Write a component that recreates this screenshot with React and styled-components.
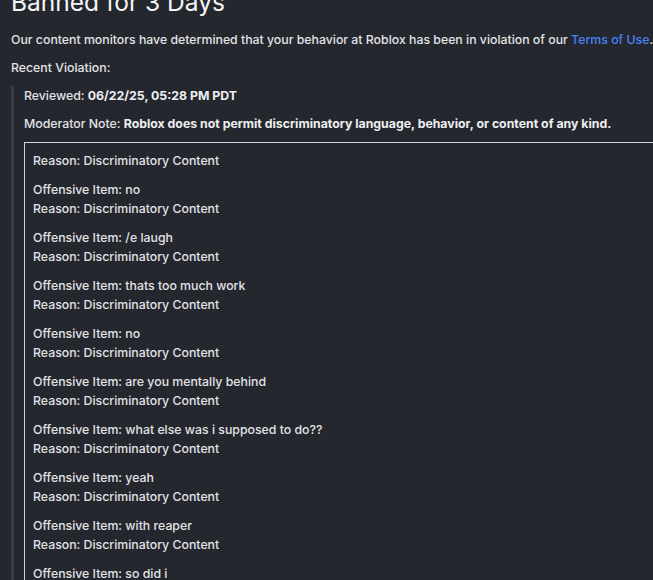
import React from "react";
import styled, { createGlobalStyle } from "styled-components";

const items = [
  { item: null },
  { item: "no" },
  { item: "/e laugh" },
  { item: "thats too much work" },
  { item: "no" },
  { item: "are you mentally behind" },
  { item: "what else was i supposed to do??" },
  { item: "yeah" },
  { item: "with reaper" },
  { item: "so did i" },
  { item: "ok" },
];

const GlobalStyle = createGlobalStyle`
  html, body {
    margin: 0;
    background: #25272e;
    overflow: hidden;
  }
  body {
    font-family: "Inter", "Liberation Sans", sans-serif;
    color: #e2e3e6;
  }
`;

const App = () => {
  return (
    <>
      <GlobalStyle />
      <Page>
        <Title>Banned for 3 Days</Title>
        <Text>
          Our content monitors have determined that your behavior at Roblox has
          been in violation of our <Link href="#">Terms of Use</Link>.
        </Text>
        <Text>Recent Violation:</Text>
        <Quote>
          <Text>
            Reviewed: <b>06/22/25, 05:28 PM PDT</b>
          </Text>
          <Text>
            Moderator Note:{" "}
            <b>
              Roblox does not permit discriminatory language, behavior, or
              content of any kind.
            </b>
          </Text>
          <Box>
            {items.map((entry, i) => (
              <Entry key={i}>
                {entry.item !== null && (
                  <Line>Offensive Item: {entry.item}</Line>
                )}
                <Line>Reason: Discriminatory Content</Line>
              </Entry>
            ))}
          </Box>
        </Quote>
      </Page>
    </>
  );
};

const Page = styled.div`
  margin-top: -16px;
  padding: 0 0 0 11px;
  width: 720px;
`;

const Title = styled.h1`
  margin: 0 0 10px;
  font-size: 24.5px;
  line-height: 36px;
  font-weight: 400;
  color: #f4f5f6;
`;

const Text = styled.p`
  margin: 0 0 9px;
  font-size: 12.3px;
  line-height: 19px;
  font-weight: 500;
  white-space: nowrap;

  b {
    font-weight: 700;
    color: #eeeff1;
  }
`;

const Link = styled.a`
  color: #4a82f7;
  text-decoration: none;
`;

const Quote = styled.div`
  border-left: 3px solid #3b3d43;
  padding: 0 0 0 10px;
  margin: 0;
`;

const Box = styled.div`
  margin-top: 2px;
  border: 1px solid #d2d3d5;
  padding: 8px 0 0 8px;
  width: 700px;
`;

const Entry = styled.div`
  margin-bottom: 10px;
`;

const Line = styled.div`
  font-size: 12.3px;
  line-height: 19px;
  font-weight: 500;
`;

export default App;
